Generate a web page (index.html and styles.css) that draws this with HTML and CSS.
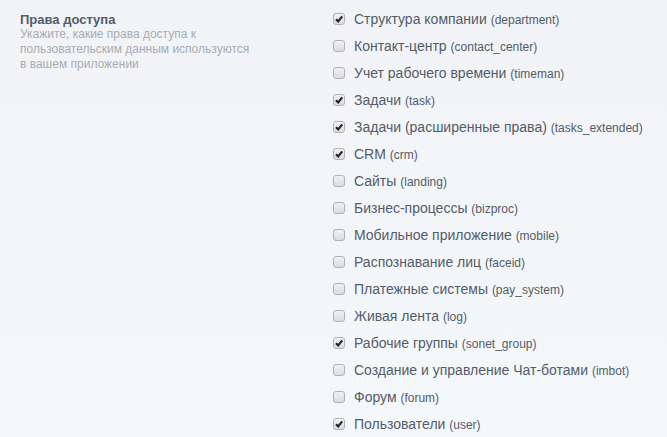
FILE: index.html
```html
<!DOCTYPE html>
<html lang="ru">
<head>
<meta charset="utf-8">
<link rel="stylesheet" href="styles.css">
</head>
<body>
<div class="page">
  <div class="info">
    <div class="title">Права доступа</div>
    <div class="desc">Укажите, какие права доступа к пользовательским данным используются в вашем приложении</div>
  </div>
  <ul class="list">
    <li class="row"><span class="cb on"><svg viewBox="0 0 10 10"><path d="M2 5.2 L4.2 7.4 L8.2 2.4" /></svg></span><span class="name">Структура компании <span class="code">(department)</span></span></li>
    <li class="row"><span class="cb"></span><span class="name">Контакт-центр <span class="code">(contact_center)</span></span></li>
    <li class="row"><span class="cb"></span><span class="name">Учет рабочего времени <span class="code">(timeman)</span></span></li>
    <li class="row"><span class="cb on"><svg viewBox="0 0 10 10"><path d="M2 5.2 L4.2 7.4 L8.2 2.4" /></svg></span><span class="name">Задачи <span class="code">(task)</span></span></li>
    <li class="row"><span class="cb on"><svg viewBox="0 0 10 10"><path d="M2 5.2 L4.2 7.4 L8.2 2.4" /></svg></span><span class="name">Задачи (расширенные права) <span class="code">(tasks_extended)</span></span></li>
    <li class="row"><span class="cb on"><svg viewBox="0 0 10 10"><path d="M2 5.2 L4.2 7.4 L8.2 2.4" /></svg></span><span class="name">CRM <span class="code">(crm)</span></span></li>
    <li class="row"><span class="cb"></span><span class="name">Сайты <span class="code">(landing)</span></span></li>
    <li class="row"><span class="cb"></span><span class="name">Бизнес-процессы <span class="code">(bizproc)</span></span></li>
    <li class="row"><span class="cb"></span><span class="name">Мобильное приложение <span class="code">(mobile)</span></span></li>
    <li class="row"><span class="cb"></span><span class="name">Распознавание лиц <span class="code">(faceid)</span></span></li>
    <li class="row"><span class="cb"></span><span class="name">Платежные системы <span class="code">(pay_system)</span></span></li>
    <li class="row"><span class="cb"></span><span class="name">Живая лента <span class="code">(log)</span></span></li>
    <li class="row"><span class="cb on"><svg viewBox="0 0 10 10"><path d="M2 5.2 L4.2 7.4 L8.2 2.4" /></svg></span><span class="name">Рабочие группы <span class="code">(sonet_group)</span></span></li>
    <li class="row"><span class="cb"></span><span class="name">Создание и управление Чат-ботами <span class="code">(imbot)</span></span></li>
    <li class="row"><span class="cb"></span><span class="name">Форум <span class="code">(forum)</span></span></li>
    <li class="row"><span class="cb on"><svg viewBox="0 0 10 10"><path d="M2 5.2 L4.2 7.4 L8.2 2.4" /></svg></span><span class="name">Пользователи <span class="code">(user)</span></span></li>
  </ul>
</div>
</body>
</html>
```

FILE: styles.css
```css
html, body {
  margin: 0;
  padding: 0;
  height: 100%;
}
body {
  background: linear-gradient(to bottom, #f2f3f6 0%, #f3f6f9 60%, #f3f8fb 100%);
  font-family: "Liberation Sans", Arial, sans-serif;
  overflow: hidden;
}
.page {
  display: flex;
  padding: 0 0 0 20px;
}
.info {
  width: 313px;
  padding-top: 12px;
}
.title {
  font-size: 13px;
  font-weight: bold;
  color: #535c69;
  line-height: 15px;
}
.desc {
  font-size: 12px;
  color: #a8adb4;
  line-height: 15px;
  width: 232px;
}
.list {
  list-style: none;
  margin: 0;
  padding: 5px 0 0 0;
}
.row {
  display: flex;
  align-items: center;
  height: 27px;
}
.cb {
  box-sizing: border-box;
  width: 12px;
  height: 12px;
  border: 1px solid #b2b2b2;
  border-radius: 3px;
  background: linear-gradient(to bottom, #f2f2f2, #dcdcdc);
  margin-right: 9px;
  display: flex;
  align-items: center;
  justify-content: center;
}
.cb svg {
  width: 10px;
  height: 10px;
}
.cb path {
  fill: none;
  stroke: #222;
  stroke-width: 2.1;
}
.name {
  font-size: 14px;
  color: #535c69;
  white-space: nowrap;
}
.code {
  font-size: 12px;
}
```
